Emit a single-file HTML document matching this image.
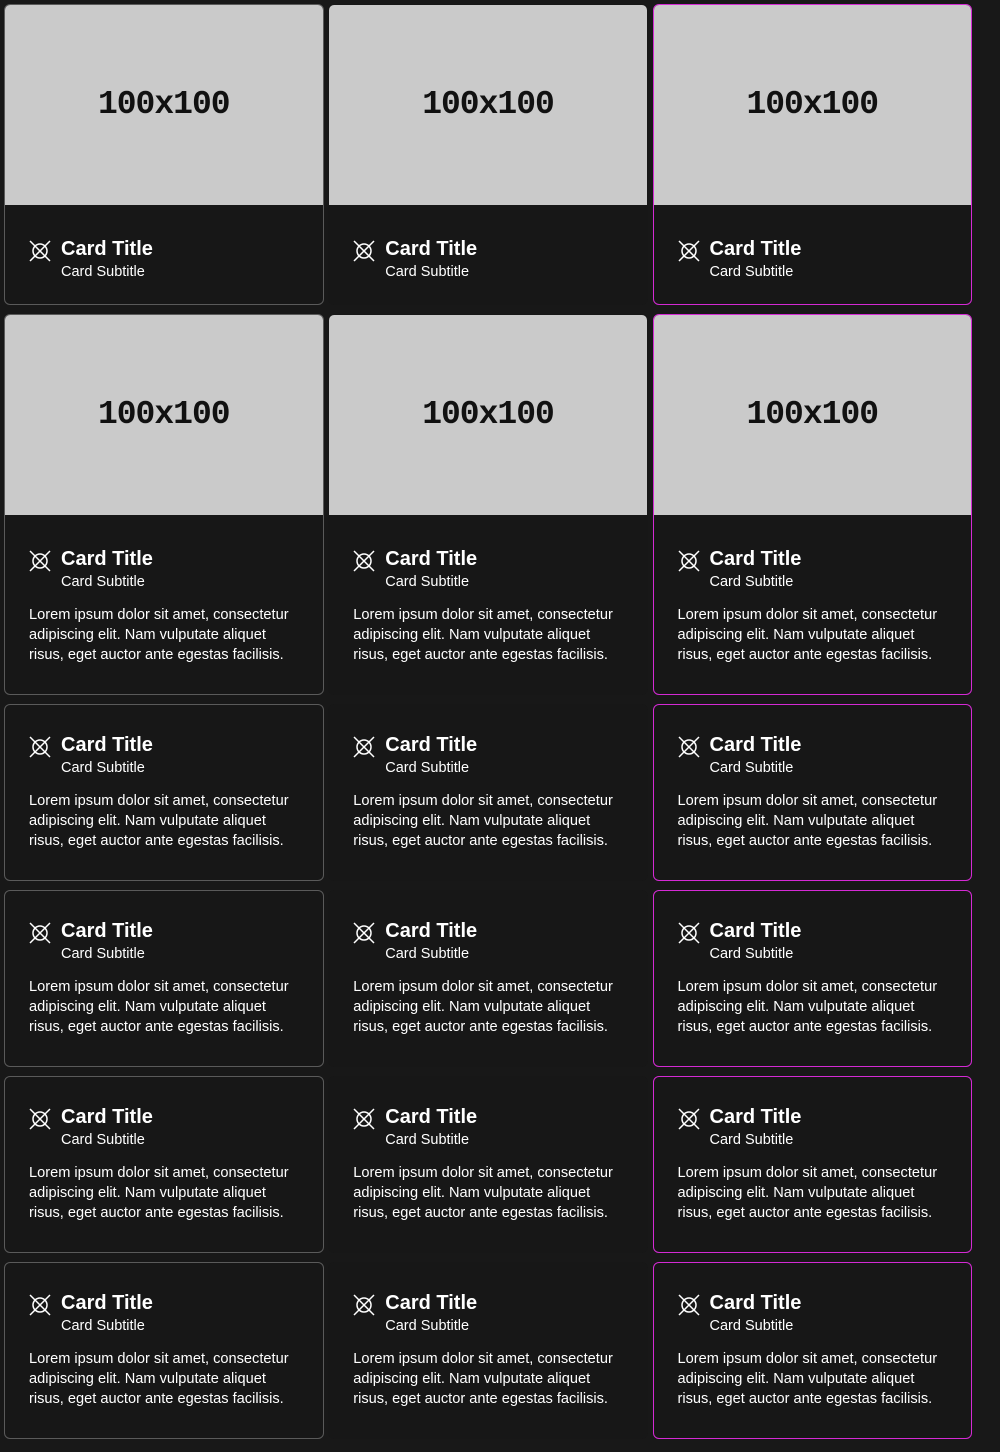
<!DOCTYPE html>
<html><head><meta charset="utf-8"><style>
*{box-sizing:border-box;margin:0;padding:0}
body{width:1000px;height:1452px;background:#181818;font-family:"Liberation Sans",sans-serif;color:#fff;overflow:hidden;position:relative}
.grid{position:absolute;left:4px;top:4px;width:968px;display:grid;grid-template-columns:319.5px 319.5px 319.5px;column-gap:4.75px;row-gap:9px}
.card{background:#171717;border:1px solid #5a5a5a;border-radius:6px;overflow:hidden}
.c2{border-color:transparent}
.c3{border-color:#d42ad4}
.img{height:200px;background:#cacaca;display:flex;align-items:center;justify-content:center;font-family:"Liberation Mono",monospace;font-weight:bold;font-size:33px;color:#111;letter-spacing:-1px;padding-bottom:2px}
.ct{padding:28px 24px 29px 24px}
.img + .ct{padding-top:32px}
.hd{display:flex}
.ic{width:24px;height:24px;margin-top:2px;margin-left:-1px;margin-right:9px;flex:none}
.t{font-size:20px;font-weight:bold;line-height:24px}
.s{font-size:14.5px;line-height:20px;margin-top:1px}
.b{font-size:14.6px;line-height:20px;margin-top:13px}
.short{padding-bottom:22px}
</style></head><body><div class="grid">

<div class="card c1"><div class="img">100x100</div><div class="ct short"><div class="hd"><svg class="ic" viewBox="0 0 24 24" fill="none" stroke="#fff" stroke-width="1.5"><circle cx="12" cy="12" r="7"/><path d="M2 2L22 22M22 2L2 22"/></svg><div><div class="t">Card Title</div><div class="s">Card Subtitle</div></div></div></div></div>
<div class="card c2"><div class="img">100x100</div><div class="ct short"><div class="hd"><svg class="ic" viewBox="0 0 24 24" fill="none" stroke="#fff" stroke-width="1.5"><circle cx="12" cy="12" r="7"/><path d="M2 2L22 22M22 2L2 22"/></svg><div><div class="t">Card Title</div><div class="s">Card Subtitle</div></div></div></div></div>
<div class="card c3"><div class="img">100x100</div><div class="ct short"><div class="hd"><svg class="ic" viewBox="0 0 24 24" fill="none" stroke="#fff" stroke-width="1.5"><circle cx="12" cy="12" r="7"/><path d="M2 2L22 22M22 2L2 22"/></svg><div><div class="t">Card Title</div><div class="s">Card Subtitle</div></div></div></div></div>

<div class="card c1"><div class="img">100x100</div><div class="ct"><div class="hd"><svg class="ic" viewBox="0 0 24 24" fill="none" stroke="#fff" stroke-width="1.5"><circle cx="12" cy="12" r="7"/><path d="M2 2L22 22M22 2L2 22"/></svg><div><div class="t">Card Title</div><div class="s">Card Subtitle</div></div></div><div class="b">Lorem ipsum dolor sit amet, consectetur adipiscing elit. Nam vulputate aliquet risus, eget auctor ante egestas facilisis.</div></div></div>
<div class="card c2"><div class="img">100x100</div><div class="ct"><div class="hd"><svg class="ic" viewBox="0 0 24 24" fill="none" stroke="#fff" stroke-width="1.5"><circle cx="12" cy="12" r="7"/><path d="M2 2L22 22M22 2L2 22"/></svg><div><div class="t">Card Title</div><div class="s">Card Subtitle</div></div></div><div class="b">Lorem ipsum dolor sit amet, consectetur adipiscing elit. Nam vulputate aliquet risus, eget auctor ante egestas facilisis.</div></div></div>
<div class="card c3"><div class="img">100x100</div><div class="ct"><div class="hd"><svg class="ic" viewBox="0 0 24 24" fill="none" stroke="#fff" stroke-width="1.5"><circle cx="12" cy="12" r="7"/><path d="M2 2L22 22M22 2L2 22"/></svg><div><div class="t">Card Title</div><div class="s">Card Subtitle</div></div></div><div class="b">Lorem ipsum dolor sit amet, consectetur adipiscing elit. Nam vulputate aliquet risus, eget auctor ante egestas facilisis.</div></div></div>

<div class="card c1"><div class="ct"><div class="hd"><svg class="ic" viewBox="0 0 24 24" fill="none" stroke="#fff" stroke-width="1.5"><circle cx="12" cy="12" r="7"/><path d="M2 2L22 22M22 2L2 22"/></svg><div><div class="t">Card Title</div><div class="s">Card Subtitle</div></div></div><div class="b">Lorem ipsum dolor sit amet, consectetur adipiscing elit. Nam vulputate aliquet risus, eget auctor ante egestas facilisis.</div></div></div>
<div class="card c2"><div class="ct"><div class="hd"><svg class="ic" viewBox="0 0 24 24" fill="none" stroke="#fff" stroke-width="1.5"><circle cx="12" cy="12" r="7"/><path d="M2 2L22 22M22 2L2 22"/></svg><div><div class="t">Card Title</div><div class="s">Card Subtitle</div></div></div><div class="b">Lorem ipsum dolor sit amet, consectetur adipiscing elit. Nam vulputate aliquet risus, eget auctor ante egestas facilisis.</div></div></div>
<div class="card c3"><div class="ct"><div class="hd"><svg class="ic" viewBox="0 0 24 24" fill="none" stroke="#fff" stroke-width="1.5"><circle cx="12" cy="12" r="7"/><path d="M2 2L22 22M22 2L2 22"/></svg><div><div class="t">Card Title</div><div class="s">Card Subtitle</div></div></div><div class="b">Lorem ipsum dolor sit amet, consectetur adipiscing elit. Nam vulputate aliquet risus, eget auctor ante egestas facilisis.</div></div></div>

<div class="card c1"><div class="ct"><div class="hd"><svg class="ic" viewBox="0 0 24 24" fill="none" stroke="#fff" stroke-width="1.5"><circle cx="12" cy="12" r="7"/><path d="M2 2L22 22M22 2L2 22"/></svg><div><div class="t">Card Title</div><div class="s">Card Subtitle</div></div></div><div class="b">Lorem ipsum dolor sit amet, consectetur adipiscing elit. Nam vulputate aliquet risus, eget auctor ante egestas facilisis.</div></div></div>
<div class="card c2"><div class="ct"><div class="hd"><svg class="ic" viewBox="0 0 24 24" fill="none" stroke="#fff" stroke-width="1.5"><circle cx="12" cy="12" r="7"/><path d="M2 2L22 22M22 2L2 22"/></svg><div><div class="t">Card Title</div><div class="s">Card Subtitle</div></div></div><div class="b">Lorem ipsum dolor sit amet, consectetur adipiscing elit. Nam vulputate aliquet risus, eget auctor ante egestas facilisis.</div></div></div>
<div class="card c3"><div class="ct"><div class="hd"><svg class="ic" viewBox="0 0 24 24" fill="none" stroke="#fff" stroke-width="1.5"><circle cx="12" cy="12" r="7"/><path d="M2 2L22 22M22 2L2 22"/></svg><div><div class="t">Card Title</div><div class="s">Card Subtitle</div></div></div><div class="b">Lorem ipsum dolor sit amet, consectetur adipiscing elit. Nam vulputate aliquet risus, eget auctor ante egestas facilisis.</div></div></div>

<div class="card c1"><div class="ct"><div class="hd"><svg class="ic" viewBox="0 0 24 24" fill="none" stroke="#fff" stroke-width="1.5"><circle cx="12" cy="12" r="7"/><path d="M2 2L22 22M22 2L2 22"/></svg><div><div class="t">Card Title</div><div class="s">Card Subtitle</div></div></div><div class="b">Lorem ipsum dolor sit amet, consectetur adipiscing elit. Nam vulputate aliquet risus, eget auctor ante egestas facilisis.</div></div></div>
<div class="card c2"><div class="ct"><div class="hd"><svg class="ic" viewBox="0 0 24 24" fill="none" stroke="#fff" stroke-width="1.5"><circle cx="12" cy="12" r="7"/><path d="M2 2L22 22M22 2L2 22"/></svg><div><div class="t">Card Title</div><div class="s">Card Subtitle</div></div></div><div class="b">Lorem ipsum dolor sit amet, consectetur adipiscing elit. Nam vulputate aliquet risus, eget auctor ante egestas facilisis.</div></div></div>
<div class="card c3"><div class="ct"><div class="hd"><svg class="ic" viewBox="0 0 24 24" fill="none" stroke="#fff" stroke-width="1.5"><circle cx="12" cy="12" r="7"/><path d="M2 2L22 22M22 2L2 22"/></svg><div><div class="t">Card Title</div><div class="s">Card Subtitle</div></div></div><div class="b">Lorem ipsum dolor sit amet, consectetur adipiscing elit. Nam vulputate aliquet risus, eget auctor ante egestas facilisis.</div></div></div>

<div class="card c1"><div class="ct"><div class="hd"><svg class="ic" viewBox="0 0 24 24" fill="none" stroke="#fff" stroke-width="1.5"><circle cx="12" cy="12" r="7"/><path d="M2 2L22 22M22 2L2 22"/></svg><div><div class="t">Card Title</div><div class="s">Card Subtitle</div></div></div><div class="b">Lorem ipsum dolor sit amet, consectetur adipiscing elit. Nam vulputate aliquet risus, eget auctor ante egestas facilisis.</div></div></div>
<div class="card c2"><div class="ct"><div class="hd"><svg class="ic" viewBox="0 0 24 24" fill="none" stroke="#fff" stroke-width="1.5"><circle cx="12" cy="12" r="7"/><path d="M2 2L22 22M22 2L2 22"/></svg><div><div class="t">Card Title</div><div class="s">Card Subtitle</div></div></div><div class="b">Lorem ipsum dolor sit amet, consectetur adipiscing elit. Nam vulputate aliquet risus, eget auctor ante egestas facilisis.</div></div></div>
<div class="card c3"><div class="ct"><div class="hd"><svg class="ic" viewBox="0 0 24 24" fill="none" stroke="#fff" stroke-width="1.5"><circle cx="12" cy="12" r="7"/><path d="M2 2L22 22M22 2L2 22"/></svg><div><div class="t">Card Title</div><div class="s">Card Subtitle</div></div></div><div class="b">Lorem ipsum dolor sit amet, consectetur adipiscing elit. Nam vulputate aliquet risus, eget auctor ante egestas facilisis.</div></div></div>

</div></body></html>
